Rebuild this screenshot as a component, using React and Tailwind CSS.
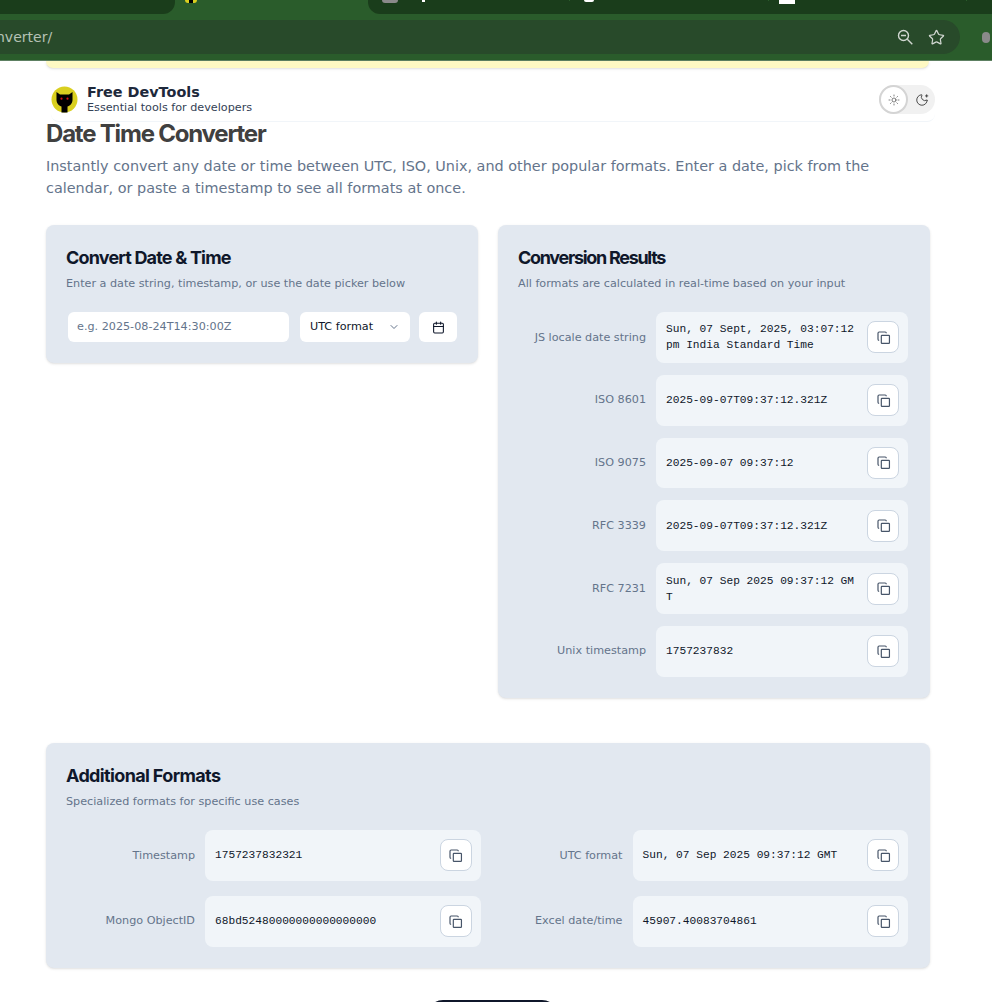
import { Calendar, ChevronDown, MoonStar, Star, Sun } from 'lucide-react';

const results = [
  { label: 'JS locale date string', value: 'Sun, 07 Sept, 2025, 03:07:12 pm India Standard Time' },
  { label: 'ISO 8601', value: '2025-09-07T09:37:12.321Z' },
  { label: 'ISO 9075', value: '2025-09-07 09:37:12' },
  { label: 'RFC 3339', value: '2025-09-07T09:37:12.321Z' },
  { label: 'RFC 7231', value: 'Sun, 07 Sep 2025 09:37:12 GMT' },
  { label: 'Unix timestamp', value: '1757237832' },
];

const additional = [
  { label: 'Timestamp', value: '1757237832321' },
  { label: 'UTC format', value: 'Sun, 07 Sep 2025 09:37:12 GMT' },
  { label: 'Mongo ObjectID', value: '68bd52480000000000000000' },
  { label: 'Excel date/time', value: '45907.40083704861' },
];

function CopyIcon() {
  return (
    <svg width="15" height="15" viewBox="0 0 24 24" fill="none" stroke="currentColor" strokeWidth="1.9">
      <rect x="8.5" y="8.5" width="13" height="13" rx="1" />
      <path d="M5 16.5c-1 0-1.8-.8-1.8-1.8V5c0-1 .8-1.8 1.8-1.8h9.7c1 0 1.8.8 1.8 1.8" />
    </svg>
  );
}

function ZoomOutIcon() {
  return (
    <svg width="16" height="16" viewBox="0 0 16 16" fill="none" stroke="currentColor" strokeWidth="1.4">
      <circle cx="6.5" cy="6.5" r="5" />
      <path d="M10.3 10.3l5 5M4 6.5h5" />
    </svg>
  );
}

function ResultRow({ label, value, labelWidth }) {
  return (
    <div className="flex items-center gap-[10px]">
      <div className={`${labelWidth} shrink-0 pt-[1px] text-right text-[11.2px] text-[#64748b]`}>{label}</div>
      <div className="flex h-[50.8px] min-w-0 flex-1 items-center justify-between gap-3 rounded-lg bg-[#f1f5f9] pl-[10px] pr-[9px]">
        <span className="min-w-0 break-all font-['Liberation_Mono',monospace] text-[11.2px] leading-4 text-[#0f172a]">{value}</span>
        <button className="flex h-8 w-8 shrink-0 items-center justify-center rounded-lg border border-[#cbd5e1] bg-white text-[#475569]">
          <CopyIcon />
        </button>
      </div>
    </div>
  );
}

function Heading({ title, sub, tracking }) {
  return (
    <>
      <h2 className={`${tracking} font-['Inter',sans-serif] text-lg font-bold leading-7 text-[#0f172a]`}>{title}</h2>
      <p className="mt-1 text-[11.2px] leading-4 text-[#64748b]">{sub}</p>
    </>
  );
}

export default function App() {
  return (
    <div className="h-[1002px] w-[992px] overflow-hidden bg-white font-['DejaVu_Sans',sans-serif]">
      <div className="h-[61px] border-b border-[#5d8062] bg-[#2a5c2b]">
        <div className="flex h-[14px]">
          <div className="h-[14px] w-[175px] rounded-br-xl bg-[#1a3d1b]" />
          <div className="h-[3px] w-[193px] pl-[10px]">
            <div className="flex h-[3px] w-3 justify-center rounded-b-full bg-[#d9cf1f]">
              <div className="h-[3px] w-[4px] bg-black" />
            </div>
          </div>
          <div className="flex h-[14px] flex-1 items-start rounded-bl-xl bg-[#1a3d1b]">
            <div className="ml-[14px] h-[3px] w-4 rounded-b-sm bg-[#8a8a8a]" />
            <div className="ml-6 h-[2px] w-[3px] bg-white" />
            <div className="ml-[144px] h-[1px] w-[1px] bg-[#2a5c2b]" />
            <div className="ml-[14px] h-[2px] w-[10px] rounded-b-full bg-white" />
            <div className="ml-[174px] h-[1px] w-[1px] bg-[#2a5c2b]" />
            <div className="ml-[10px] h-[4px] w-4 bg-white" />
            <div className="ml-[171px] h-[1px] w-[1px] bg-[#2a5c2b]" />
          </div>
        </div>
        <div className="mt-[6px] flex items-center">
          <div className="flex h-[34px] w-[960px] items-center justify-between overflow-hidden rounded-r-full bg-[#284a2a] pr-[15px] text-[14px] text-[#b5c2b5]">
            <span className="-ml-[4px]">nverter/</span>
            <div className="flex items-center gap-[15px] text-[#d0d6d0]">
              <ZoomOutIcon />
              <Star size={17} strokeWidth={1.75} />
            </div>
          </div>
          <div className="ml-[22px] h-[11px] w-2 rounded-full bg-[#8a8a8a]" />
        </div>
      </div>

      <div className="ml-[46px] mr-[63px] h-[7px] rounded-b-lg bg-[#fef9c3] shadow-sm" />

      <header className="ml-[51px] mr-[57px] mt-[10px] flex h-[44px] items-center justify-between rounded-b-lg border-b border-[#f1f5f9]">
        <div className="flex items-center gap-[9px]">
          <svg width="27" height="27" viewBox="0 0 27 27">
            <circle cx="13.5" cy="13.5" r="13" fill="#d9cf1f" />
            <path d="M5.5 6l3.5 2.5h9L21.5 6v8c0 3.5-3 6-5 6.5v6h-6v-6c-2-.5-5-3-5-6.5z" fill="#000" />
            <circle cx="10.5" cy="12.7" r="1.1" fill="#d11" />
            <circle cx="16.5" cy="12.7" r="1.1" fill="#d11" />
          </svg>
          <div className="-mt-[2px]">
            <div className="text-[14.4px] font-bold leading-[18px] text-[#1e293b]">Free DevTools</div>
            <div className="text-[11.2px] leading-[14px] text-[#334155]">Essential tools for developers</div>
          </div>
        </div>
        <div className="flex h-[29px] items-center rounded-full bg-[#f1f1f1]">
          <div className="flex h-[29px] w-[29px] items-center justify-center rounded-full border-2 border-[#d4d4d4] bg-white text-[#333]">
            <Sun size={12} strokeWidth={1.25} />
          </div>
          <div className="flex w-[27px] items-center justify-center text-[#333]">
            <MoonStar size={14} strokeWidth={1.5} />
          </div>
        </div>
      </header>

      <main className="mx-[46px]">
        <h1 className="font-['Inter',sans-serif] text-2xl font-bold leading-[24px] tracking-[-0.05em] text-[#404040]">Date Time Converter</h1>
        <p className="mt-[9px] w-[884px] text-[14.4px] leading-[22px] text-[#64748b]">
          Instantly convert any date or time between UTC, ISO, Unix, and other popular formats. Enter a date, pick from the calendar, or paste a timestamp to see all formats at once.
        </p>

        <div className="mt-[26px] flex items-start gap-5">
          <section className="h-[138px] w-[432px] rounded-lg bg-[#e2e8f0] px-5 pt-[19px] shadow-sm">
            <Heading title="Convert Date & Time" tracking="tracking-[-0.82px]" sub="Enter a date string, timestamp, or use the date picker below" />
            <div className="mt-5 flex h-[30px] items-center pl-[2px]">
              <div className="flex h-[30px] w-[221px] items-center rounded-md bg-white px-[9px] text-[11.2px] text-[#64748b]">e.g. 2025-08-24T14:30:00Z</div>
              <div className="ml-[11px] flex h-[30px] w-[110px] items-center justify-between rounded-md bg-white px-[10px] text-[11.2px] text-[#0f172a]">
                UTC format
                <ChevronDown size={12} className="text-[#64748b]" />
              </div>
              <div className="ml-[9px] flex h-[30px] w-[38px] items-center justify-center rounded-md bg-white text-[#0f172a]">
                <Calendar size={13} />
              </div>
            </div>
          </section>

          <section className="h-[473px] w-[432px] rounded-lg bg-[#e2e8f0] pl-5 pr-[22px] pt-[19px] shadow-sm">
            <Heading title="Conversion Results" tracking="tracking-[-1.3px]" sub="All formats are calculated in real-time based on your input" />
            <div className="mt-5 flex flex-col gap-3">
              {results.map((row) => (
                <ResultRow key={row.label} label={row.label} value={row.value} labelWidth="w-[128px]" />
              ))}
            </div>
          </section>
        </div>

        <section className="mt-[45px] h-[225px] w-[884px] rounded-lg bg-[#e2e8f0] pl-5 pr-[22px] pt-[19px] shadow-sm">
          <Heading title="Additional Formats" tracking="tracking-[-0.64px]" sub="Specialized formats for specific use cases" />
          <div className="mt-5 grid grid-cols-2 gap-x-[13px] gap-y-[15.2px]">
            {additional.map((row) => (
              <ResultRow key={row.label} label={row.label} value={row.value} labelWidth="w-[129px]" />
            ))}
          </div>
        </section>

        <div className="ml-[381px] mt-8 h-8 w-[131px] rounded-t-2xl bg-[#0f172a]" />
      </main>
    </div>
  );
}
